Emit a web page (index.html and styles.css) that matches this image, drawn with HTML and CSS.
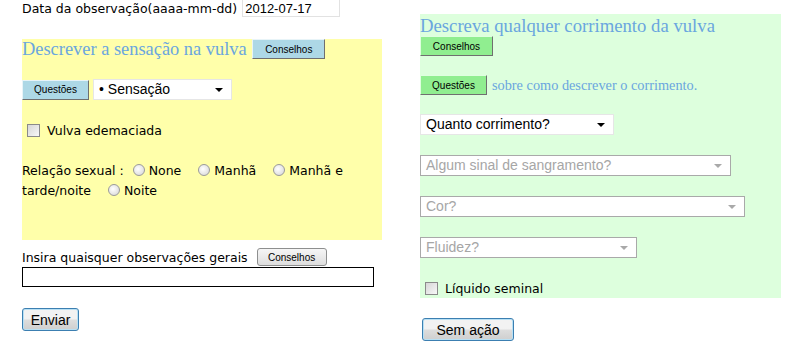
FILE: index.html
```html
<!DOCTYPE html>
<html lang="pt">

<head>
    <meta charset="UTF-8">
    <title>Observação</title>
    <link rel="stylesheet" href="styles.css">
</head>

<body>
    <div class="page">
        <div class="col col-left">
            <div class="date-row">
                <span>Data da observação(aaaa-mm-dd)</span>
                <input type="text" class="date" value="2012-07-17">
            </div>

            <div class="panel yellow">
                <h2>Descrever a sensação na vulva <button class="btn blue">Conselhos</button></h2>
                <div class="row">
                    <button class="btn blue">Questões</button>
                    <div class="select">• Sensação<span class="arrow"></span></div>
                </div>
                <label class="check"><span class="box"></span>Vulva edemaciada</label>
                <div class="radios">
                    Relação sexual :
                    <label><span class="radio"></span>None</label>
                    <label><span class="radio"></span>Manhã</label>
                    <label><span class="radio"></span>Manhã e tarde/noite</label>
                    <label><span class="radio"></span>Noite</label>
                </div>
            </div>

            <div class="notes">
                Insira quaisquer observações gerais <button class="btn grey">Conselhos</button>
            </div>
            <input type="text" class="notes-input">

            <button class="submit">Enviar</button>
        </div>

        <div class="col col-right">
            <div class="panel green">
                <h2>Descreva qualquer corrimento da vulva</h2>
                <button class="btn lime">Conselhos</button>
                <div class="row">
                    <button class="btn lime">Questões</button>
                    <span class="hint">sobre como descrever o corrimento.</span>
                </div>
                <div class="select w-quanto">Quanto corrimento?<span class="arrow"></span></div>
                <div class="select off w-sangue">Algum sinal de sangramento?<span class="arrow"></span></div>
                <div class="select off w-cor">Cor?<span class="arrow"></span></div>
                <div class="select off w-fluidez">Fluidez?<span class="arrow"></span></div>
                <label class="check"><span class="box"></span>Líquido seminal</label>
            </div>

            <button class="submit wide">Sem ação</button>
        </div>
    </div>
</body>

</html>
```

FILE: styles.css
```css
body {
    margin: 0;
    font-family: "DejaVu Sans", Verdana, sans-serif;
    font-size: 12.5px;
    color: #000;
    background: #fff;
}

.page {
    display: flex;
    padding-left: 22px;
    gap: 38px;
}

.col-left {
    width: 360px;
}

.col-right {
    width: 361px;
    padding-top: 14px;
}

.date-row {
    display: flex;
    align-items: flex-start;
    height: 39px;
}

.date-row span {
    padding-top: 1px;
}

.date {
    margin: -1px 0 0 5px;
    width: 98px;
    height: 18px;
    box-sizing: border-box;
    border: 1px solid #e2e2e2;
    padding: 0 2px;
    font-family: "Liberation Sans", Arial, sans-serif;
    font-size: 13px;
}

.panel h2 {
    margin: 0;
    font-family: "Liberation Serif", "Times New Roman", serif;
    font-weight: normal;
    font-size: 18.72px;
    line-height: 20px;
    color: #6aa6df;
}

.yellow h2 {
    font-size: 18.4px;
}

.yellow {
    background: #ffffaa;
    height: 201px;
}

.green {
    background: #ddffdd;
    height: 284px;
}

.green h2 {
    padding-top: 1px;
    line-height: 21px;
}

.btn {
    font-family: "Liberation Sans", Arial, sans-serif;
    font-size: 10px;
    height: 20px;
    padding: 0 8px;
    border: 1px solid;
    border-color: #e8f4f8 #6f6f6f #6f6f6f #e8f4f8;
    vertical-align: top;
    color: #000;
}

.blue {
    background: #add8e6;
}

.lime {
    background: #90ee90;
    border-color: #dfffdf #6f6f6f #6f6f6f #dfffdf;
    display: block;
    width: 73px;
    height: 20px;
}

.yellow h2 .btn {
    margin-left: 1px;
    width: 73px;
}

.grey {
    height: 18px;
    width: 70px;
    padding: 0;
    border: 1px solid #8e8f8f;
    border-radius: 3px;
    background: linear-gradient(#f6f6f6, #dedede);
}

.row {
    display: flex;
    align-items: center;
    margin-top: 20px;
}

.row .blue {
    width: 67px;
    height: 20px;
}

.row .lime {
    width: 67px;
}

.green .row {
    margin-top: 19px;
}

.select {
    position: relative;
    box-sizing: border-box;
    height: 21px;
    line-height: 19px;
    background: #fff;
    border: 1px solid #e6e6e6;
    padding-left: 5px;
    font-family: "Liberation Sans", Arial, sans-serif;
    font-size: 14px;
}

.yellow .select {
    width: 139px;
    margin-left: 4px;
}

.arrow {
    position: absolute;
    right: 8px;
    top: 8px;
    border-left: 4px solid transparent;
    border-right: 4px solid transparent;
    border-top: 4px solid #000;
}

.off {
    color: #a6a6a6;
    border-color: #a9a9a9;
}

.off .arrow {
    border-top-color: #a9a9a9;
}

.check {
    display: flex;
    align-items: center;
    margin-top: 23px;
    margin-left: 5px;
}

.box {
    width: 11px;
    height: 11px;
    border: 1px solid #8a8a8a;
    background: linear-gradient(135deg, #d6d6d6, #f8f8f8);
    margin-right: 7px;
}

.radios {
    margin-top: 23px;
    line-height: 20px;
}

.radios label {
    margin-left: 5px;
    margin-right: 8px;
}

.radio {
    display: inline-block;
    width: 10px;
    height: 10px;
    border: 1px solid #9a9a9a;
    border-radius: 50%;
    background: radial-gradient(circle at 40% 40%, #fff, #d4d4d4);
    margin-right: 4px;
    vertical-align: -1px;
}

.notes {
    margin-top: 8px;
    height: 19px;
}

.notes .btn {
    vertical-align: 1px;
    margin-left: 5px;
}

.notes-input {
    display: block;
    box-sizing: border-box;
    width: 352px;
    height: 20px;
    margin: 0;
    border: 1px solid #000;
}

.submit {
    display: block;
    margin-top: 21px;
    height: 23px;
    width: 57px;
    font-family: "Liberation Sans", Arial, sans-serif;
    font-size: 14px;
    border: 1px solid #3c7fb1;
    border-radius: 3px;
    background: linear-gradient(#f2f2f2 45%, #dcdcdc 55%, #cfcfcf);
    box-shadow: inset 0 0 0 1px #b8e0f4;
}

.wide {
    width: 92px;
    margin-left: 2px;
    margin-top: 20px;
}

.green .lime:first-of-type {
    margin-top: 0;
}

.hint {
    margin-left: 5px;
    font-family: "Liberation Serif", "Times New Roman", serif;
    font-size: 14.3px;
    color: #6aa6df;
}

.green .select {
    margin-top: 20px;
}

.green .w-quanto {
    margin-top: 19px;
}

.w-quanto {
    width: 194px;
}

.w-sangue {
    width: 311px;
}

.w-cor {
    width: 325px;
}

.w-fluidez {
    width: 217px;
}

.green .check {
    margin-top: 23px;
}
```
